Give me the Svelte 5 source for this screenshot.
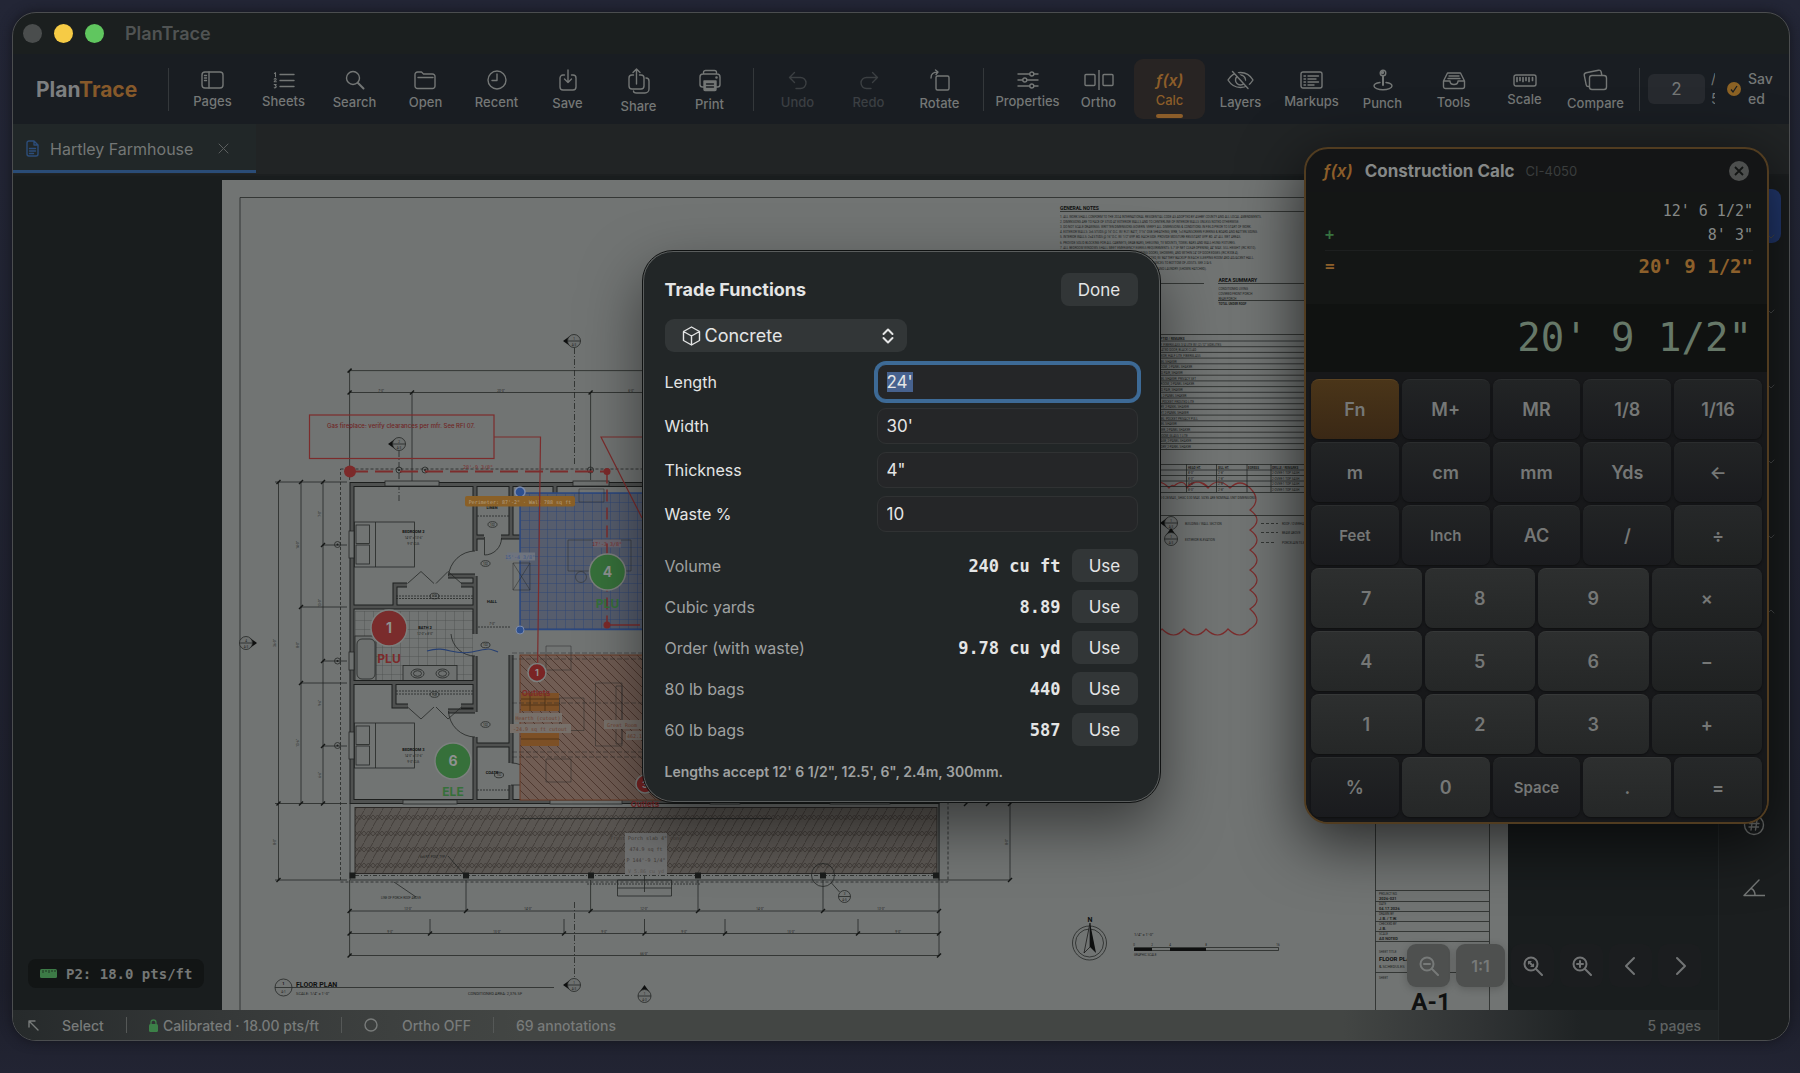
<script lang="ts">
  import { onMount } from 'svelte';

  type Tool = { label: string; w: number; h: number; icon: string; off?: boolean };

  const fileTools: Tool[] = [
    { label: 'Pages', w: 23, h: 18, icon: '<rect x="1" y="1" width="21" height="16" rx="3"/><path d="M8 1v16M3.5 4.500h2M3.500 7h2M3.500 9.500h2"/>' },
    { label: 'Sheets', w: 22, h: 17, icon: '<path d="M7 2.500h14M7 8.500h14M7 14.500h14"/><path stroke-width="1.100" d="M1.500 1.500l1-.8v4M1.200 7.200c.5-1 2-.8 2 .2 0 .8-2 1.300-2 2.300h2.200M1.200 12.500h2l-1 1.300c1.500 0 1.500 2.400-1 2"/>' },
    { label: 'Search', w: 20, h: 20, icon: '<circle cx="8" cy="8" r="6.500"/><path stroke-width="2" d="M13 13l5.500 5.500"/>' },
    { label: 'Open', w: 23, h: 19, icon: '<path d="M1 15V3.500A2.500 2.500 0 0 1 3.500 1h4l2 2h9A2.500 2.500 0 0 1 21 5.500V15a2.500 2.500 0 0 1-2.500 2.500h-15A2.500 2.500 0 0 1 1 15zM4 6.500h15"/>' },
    { label: 'Recent', w: 20, h: 20, icon: '<circle cx="10" cy="10" r="9"/><path d="M10 4v6.500H5"/>' },
    { label: 'Save', w: 18, h: 22, icon: '<path d="M5.500 6H4a3 3 0 0 0-3 3v9a3 3 0 0 0 3 3h10a3 3 0 0 0 3-3V9a3 3 0 0 0-3-3h-1.500M9 1v12.500M5.500 10L9 13.500 12.500 10"/>' },
    { label: 'Share', w: 24, h: 27, icon: '<path d="M6.500 8H5a3 3 0 0 0-3 3v8a3 3 0 0 0 3 3h9a3 3 0 0 0 3-3v-8a3 3 0 0 0-3-3h-1.500M9.500 17V2M6 5.500L9.500 2 13 5.500M19 11c2 0 3 1 3 3v8a4 4 0 0 1-4 4H9.500c-2 0-3-.8-3-2"/>' },
    { label: 'Print', w: 24, h: 23, icon: '<path d="M5.500 18H4.500A2.500 2.500 0 0 1 2 15.500V8a3 3 0 0 1 3-3h14a3 3 0 0 1 3 3v7.500a2.500 2.500 0 0 1-2.500 2.500h-1M5.500 5V3.500A2 2 0 0 1 7.500 1.500h9a2 2 0 0 1 2 2V5"/><path fill="currentColor" d="M6 12h12v8.500a1 1 0 0 1-1 1H7a1 1 0 0 1-1-1z"/><path stroke="#1a1e22" d="M8.500 15h7M8.500 18h7"/><circle cx="18.500" cy="8.500" r=".6"/>' }
  ];

  const editTools: Tool[] = [
    { label: 'Undo', w: 20, h: 19, off: true, icon: '<path d="M6.500 1.500L1.500 6.500l5 5M1.500 6.500h11a5.500 5.500 0 0 1 0 11H8"/>' },
    { label: 'Redo', w: 20, h: 19, off: true, icon: '<path d="M13.500 1.500l5 5-5 5M18.500 6.500h-11a5.500 5.500 0 0 0 0 11H12"/>' },
    { label: 'Rotate', w: 20, h: 22, icon: '<rect x="6" y="7" width="13" height="14" rx="1.500"/><path d="M1 9c0-4 2-6 7-6M5.500 1L8 3 6 5.500"/>' }
  ];

  const viewTools: Tool[] = [
    { label: 'Properties', w: 22, h: 18, icon: '<path d="M1 3h11.500M17 3h4M1 9h4.500M10 9h11M1 15h11.500M17 15h4"/><circle cx="14.800" cy="3" r="2"/><circle cx="7.800" cy="9" r="2"/><circle cx="14.800" cy="15" r="2"/>' },
    { label: 'Ortho', w: 30, h: 20, icon: '<rect x="1" y="4.500" width="10" height="11" rx="1"/><rect x="19" y="4.500" width="10" height="11" rx="1"/><path d="M15 0v20"/>' },
    { label: 'Calc', w: 30, h: 16, icon: '' },
    { label: 'Layers', w: 27, h: 20, icon: '<path d="M1 10c3-5 7.500-7.500 12.500-7.500S23 5 26 10c-3 5-7.500 7.500-12.500 7.500S4 15 1 10z"/><circle cx="13.500" cy="10" r="5"/><path fill="currentColor" d="M12.500 8l4.500 5a4 4 0 0 0-4.500-5z"/><path stroke="#191d22" stroke-width="3" d="M7.500 1L23 18"/><path d="M5.500 1.500L21 18.500"/>' },
    { label: 'Markups', w: 23, h: 18, icon: '<rect x="1" y="1" width="21" height="16" rx="2"/><path d="M4 5h1.500M8 5h10.500M4 8h1.500M8 8h8M4 11h1.500M8 11h10.500M4 14h1.500M8 14h6"/>' },
    { label: 'Punch', w: 20, h: 22, icon: '<circle cx="10" cy="4" r="2.800"/><circle fill="currentColor" cx="9.500" cy="3.500" r="1"/><path stroke-width="2" d="M10 7v9"/><path d="M7 13.500c-3.500.5-6 1.800-6 3.500 0 2 4 3.800 9 3.800s9-1.800 9-3.800c0-1.700-2.500-3-6-3.500"/>' },
    { label: 'Tools', w: 24, h: 19, icon: '<path d="M1.500 10L5.500 2h13l4 8v5.500a2 2 0 0 1-2 2h-17a2 2 0 0 1-2-2zM1.500 10h6.500c0 2 1.500 3.500 4 3.500s4-1.500 4-3.500h6.500M7 5h10M6 7.500h12"/>' },
    { label: 'Scale', w: 24, h: 13, icon: '<rect x="1" y="1" width="22" height="11" rx="2"/><path d="M4 3.500v4M7 3.500v3M10 3.500v4M13 3.500v3M16 3.500v4M19.500 3.500v3" stroke-width="1.700"/>' },
    { label: 'Compare', w: 25, h: 22, icon: '<rect x="6.500" y="6.500" width="17" height="14" rx="2.500"/><path d="M6 17.500c-1.500.2-2.500-.2-2.800-1.700L1.300 6.500c-.3-1.500.3-2.500 1.800-2.800L15.500 1.200c1.500-.2 2.400.3 2.700 1.800l.6 3"/>' }
  ];

  const keyRows = [
    ['Fn', 'M+', 'MR', '1/8', '1/16'],
    ['m', 'cm', 'mm', 'Yds', '←'],
    ['Feet', 'Inch', 'AC', '/', '÷'],
    ['7', '8', '9', '×'],
    ['4', '5', '6', '−'],
    ['1', '2', '3', '+'],
    ['%', '0', 'Space', '.', '=']
  ];
  const smallKeys = ['Feet', 'Inch', 'Space'];

  function keyClass(key: string) {
    if (key === 'Fn') return 'fn';
    if (/^[0-9.]$/.test(key)) return 'digit';
    if ('÷×−+='.includes(key)) return 'op';
    return '';
  }

  const tape = [
    { op: '', value: `12' 6 1/2"` },
    { op: '+', value: `8' 3"` }
  ];

  let fields = $state([
    { id: 'length', label: 'Length', value: `24'` },
    { id: 'width', label: 'Width', value: `30'` },
    { id: 'thickness', label: 'Thickness', value: `4"` },
    { id: 'waste', label: 'Waste %', value: '10' }
  ]);

  const results = [
    { label: 'Volume', value: '240 cu ft' },
    { label: 'Cubic yards', value: '8.89' },
    { label: 'Order (with waste)', value: '9.78 cu yd' },
    { label: '80 lb bags', value: '440' },
    { label: '60 lb bags', value: '587' }
  ];

  let page = $state('2');
  let trade = $state('Concrete');

  onMount(() => {
    const first = document.getElementById('length') as HTMLInputElement;
    first.focus();
    first.select();
  });

  // plan geometry
  const walls = [
    'M352 484.500H937V801.500H352z',
    'M475 484V551M475 576V634M475 656V712M475 737V801',
    'M511 484V537M511 655V745M511 745V763M511 785V801M555 484V537',
    'M352 607H475M395 607V585H407M461 585H475M475 537H484M501 537H532M448 576H475',
    'M352 682.500H475M394 682V706H408M461 706H475M448 711H475M475 745H511'
  ].join('');
  const openings = [
    [385, 481, 54, 5], [573, 481, 36, 5], [349, 531, 5, 27], [349, 652, 5, 18], [349, 732, 5, 27],
    [403, 800, 54, 4], [550, 800, 72, 4], [710, 800, 30, 4], [830, 800, 60, 4]
  ];
  const ticks = [
    [349.6, 370.6], [349.6, 392.5], [412, 392.5], [590.6, 392.5],
    [278.500, 482], [301, 482], [323, 482], [323, 545], [301, 607], [323, 661], [301, 683], [323, 746],
    [278.500, 803.5], [301, 803.5], [323, 803.5], [278.500, 880],
    [349.6, 911], [466, 911], [590.6, 911], [698, 911], [823, 911], [939, 911],
    [349.6, 933.5], [430, 933.5], [564, 933.5], [644.5, 933.5], [725, 933.5], [858, 933.5], [939, 933.5],
    [349.6, 955.5], [939, 955.5], [966, 804], [988, 804], [1010, 804], [1010, 880]
  ];
  const dims: [number, number, string][] = [
    [381, 391.5, `7'-0"`], [501, 391.500, `20'-0"`], [631, 391.500, `6'-0"`], [408, 910, `13'-0"`], [528, 910, `14'-0"`],
    [644, 910, `12'-0"`], [760, 910, `14'-0"`], [881, 910, `13'-0"`], [390, 932.5, `9'-0"`], [497, 932.500, `15'-0"`],
    [604, 932.500, `9'-0"`], [684, 932.500, `9'-0"`], [791, 932.500, `15'-0"`], [898, 932.500, `9'-0"`], [644, 954.5, `66'-0"`], [492, 625, `7'-0"`]
  ];
  const sideDims: [number, number, string][] = [
    [321, 514, `7'-0"`], [299, 545, `14'-0"`], [321, 603, `13'-0"`], [299, 645, `8'-0"`], [276, 643, `36'-0"`],
    [321, 703, `9'-6"`], [299, 743, `13'-6"`], [321, 775, `6'-6"`], [276, 842, `8'-0"`], [1008, 842, `8'-0"`]
  ];
  const markers = [
    { x: 574, y: 341, r: 'left', n: '1' },
    { x: 399, y: 444, r: 'left', n: '2' },
    { x: 246, y: 643, r: 'right', n: '4' },
    { x: 574, y: 985, r: 'left', n: '1' },
    { x: 644.5, y: 996, r: 'up', n: '1' },
    { x: 1171, y: 523, r: 'left', n: '1' },
    { x: 1171, y: 539, r: 'up', n: '1' }
  ];
  const arrows: Record<string, string> = {
    left: 'M-11 0L-4-5V5z',
    right: 'M11 0L4-5V5z',
    up: 'M0-11L-5-4H5z'
  };
  const tags = [
    [492.500, 524.5], [485.500, 563.5], [434.500, 596], [485.500, 645], [434.500, 694.5], [485.500, 724.5], [499, 775], [542, 524.5], [644, 815]
  ];
  const bubbles = [
    [399, 470], [425, 470], [590.500, 470], [337.500, 544.5], [337.500, 661], [337.500, 745.5]
  ];
  const posts = [352.5, 466, 591, 698, 823, 936];
  const beds = [522, 723];
  const notes = [
    'ALL WORK SHALL CONFORM TO THE 2024 INTERNATIONAL RESIDENTIAL CODE AS ADOPTED BY ASHBY COUNTY AND ALL LOCAL AMENDMENTS.',
    'DIMENSIONS ARE TO FACE OF STUD AT EXTERIOR WALLS AND TO CENTERLINE OF INTERIOR WALLS UNLESS NOTED OTHERWISE.',
    'DO NOT SCALE DRAWINGS. WRITTEN DIMENSIONS GOVERN. VERIFY ALL DIMENSIONS & CONDITIONS IN FIELD PRIOR TO START OF WORK.',
    'EXTERIOR WALLS: 2x6 STUDS @ 16" O.C. W/ R-21 BATT, 7/16" OSB SHEATHING, WRB, 1x3 RAINSCREEN FURRING & BOARD AND BATTEN SIDING.',
    'INTERIOR WALLS: 2x4 STUDS @ 16" O.C. W/ 1/2" GYP. BD. EACH SIDE. PROVIDE MOISTURE RESISTANT GYP. BD. AT ALL WET AREAS.',
    'PROVIDE SOLID BLOCKING FOR ALL CABINETS, GRAB BARS, SHELVING, TV MOUNTS, TOWEL BARS AND WALL-HUNG FIXTURES.',
    'ALL BEDROOM WINDOWS SHALL MEET EMERGENCY EGRESS REQUIREMENTS: 5.7 SF NET CLEAR OPENING, 44" MAX. SILL HEIGHT (IRC R310).',
    'SAFETY GLAZING IN ALL HAZARDOUS LOCATIONS INCLUDING DOORS, SHOWERS, AND WITHIN 24" OF DOOR EDGES (IRC R308.4).',
    'SMOKE AND CO ALARMS SHALL BE HARDWIRED, INTERCONNECTED, W/ BATTERY BACKUP IN EACH SLEEPING ROOM AND ADJACENT HALL.',
    'GAS FIREPLACE TO MAINTAIN MANUFACTURER REQUIRED CLEARANCES TO BOTTOM OF JOISTS. SEE 2/A-5.',
    'EXHAUST FANS TO EXTERIOR IN BATHROOMS, POWDER, MUDROOM AND LAUNDRY (SHOWN HATCHED).'
  ];
  const doors = [
    'ENTRY, FIBERGLASS 3/4 LITE W/ (2) 12" SIDELITES', 'INSULATED DOOR, BLACK CLAD', 'EXTERIOR, HALF LITE, FIBERGLASS', '2-PANEL SHAKER',
    'BEDROOM, 2-PANEL SHAKER', 'BIFOLD PAIR, SHAKER', '2-PANEL SHAKER, PRIVACY SET', 'BATHROOM, 2-PANEL SHAKER', 'BIFOLD PAIR, SHAKER',
    'LINEN, 2-PANEL SHAKER', 'BARN, POCKET, FROSTED LITE', 'PANTRY, 2-PANEL SHAKER', 'CLOSET, 2-PANEL SHAKER', '2-PANEL, POCKET PRIVACY PULL',
    '2-PANEL SHAKER', 'POWDER, 2-PANEL SHAKER', 'MUDROOM, GLASS 1 LITE', 'STORAGE, 2-PANEL SHAKER', 'LAUNDRY, 2-PANEL SHAKER'
  ];
  const titleBlock: [number, string, string][] = [
    [895, 'PROJECT NO.', '2026-021'],
    [905, 'DATE', '04.17.2026'],
    [915, 'DRAWN BY', 'J.B. / T.W.'],
    [925, 'CHECKED BY', 'J.B.'],
    [935, 'SCALE', 'AS NOTED']
  ];
</script>

{#snippet toolButton(tool: Tool)}
  <button class="tool" class:active={tool.label === 'Calc'} disabled={tool.off}>
    {#if tool.label === 'Calc'}
      <span class="fx tool-fx">ƒ(x)</span>
    {:else}
      <svg class="icon" width={tool.w} height={tool.h} viewBox="0 0 {tool.w} {tool.h}">{@html tool.icon}</svg>
    {/if}
    <span class="tool-label">{tool.label}</span>
  </button>
{/snippet}

<div class="desktop">
  <div class="window">
    <header class="titlebar">
      <span class="light"></span>
      <span class="light yellow"></span>
      <span class="light green"></span>
      <span class="window-title">PlanTrace</span>
    </header>

    <!-- Toolbar -->
    <nav class="toolbar">
      <div class="brand">Plan<span>Trace</span></div>
      <div class="sep"></div>
      {#each fileTools as tool}{@render toolButton(tool)}{/each}
      <div class="sep"></div>
      {#each editTools as tool}{@render toolButton(tool)}{/each}
      <div class="sep"></div>
      {#each viewTools as tool}{@render toolButton(tool)}{/each}
      <div class="sep"></div>
      <input class="page-input" aria-label="Page" bind:value={page} />
      <span class="page-total">/ 5</span>
      <svg class="saved-icon" width="14" height="14" viewBox="0 0 14 14">
        <circle cx="7" cy="7" r="7" fill="#8c6224" />
        <path d="M4 7.500l2 2.500 4-6" fill="none" stroke="#1a1e22" stroke-width="1.300" />
      </svg>
      <span class="saved">Saved</span>
    </nav>

    <!-- Document tabs -->
    <div class="tabs">
      <div class="tab">
        <svg class="icon doc" width="13" height="17" viewBox="0 0 13 17">
          <path d="M8 1H3a2 2 0 0 0-2 2v11a2 2 0 0 0 2 2h7a2 2 0 0 0 2-2V5zM8 1v4h4M3.500 8.500h6M3.500 11h6M3.500 13.500h4" />
        </svg>
        <span>Hartley Farmhouse</span>
        <button class="tab-close" aria-label="Close tab">
          <svg class="icon" width="11" height="11" viewBox="0 0 11 11"><path d="M1 1l9 9M10 1l-9 9" /></svg>
        </button>
      </div>
    </div>

    <div class="workspace">
      <div class="main">
        <div class="canvas">
          <svg class="sheet" width="1286" height="831" viewBox="222 180 1286 831">
            <defs>
              <pattern id="tile" width="9" height="9" patternUnits="userSpaceOnUse" x="355" y="611">
                <path d="M0 0H9M0 0V9" fill="none" stroke="#4a4d4c" stroke-width=".8" />
              </pattern>
              <pattern id="bluegrid" width="9" height="9" patternUnits="userSpaceOnUse" x="520" y="493">
                <rect width="9" height="9" fill="#565d6d" />
                <path d="M0 0H9M0 0V9" fill="none" stroke="#2f4674" stroke-width="1" />
              </pattern>
              <pattern id="hatch" width="9" height="9" patternUnits="userSpaceOnUse">
                <rect width="9" height="9" fill="#705c53" />
                <path d="M-1 -1L10 10M-1 8L1 10M8 -1L10 1" stroke="#4c352c" stroke-width=".9" />
              </pattern>
              <pattern id="porch" width="9" height="16" patternUnits="userSpaceOnUse" x="355" y="811">
                <rect width="9" height="16" fill="#5a5652" />
                <path d="M-1 17L10 -2M-4 6L4 -8M5 24L13 10M0 4l4.500 5 4.500 -5M0 9l4.500 -5 4.500 5" fill="none" stroke="#3c3733" stroke-width=".8" />
              </pattern>
            </defs>
            <rect x="222" y="180" width="1286" height="831" fill="#717473" />
            <path class="ln" d="M240 1011V197.500H1489.500V1011M1375.500 823V1011" />

            <!-- dimension lines -->
            <path class="ln" d="M349.600 370.600H939M349.600 392.500H939M349.600 370V480M412 392V486M590.600 392V480" />
            <path class="ln" d="M278.500 482V880M301 482V803.500M323 482V803.500M275 482H347M301 607H347M323 545H347M323 661H347M301 683H347M323 746H347M275 803.500H347M275 880H347" />
            <path class="ln" d="M349.600 880V956M466 880V911M590.600 880V911M698 880V911M823 880V911M939 803V956M349.600 911H939M349.600 933.500H939M349.600 955.500H939M430 919V933M564 919V933M644.500 919V933M725 919V933M858 919V933M939 880H1010M1010 802V880" />
            {#each ticks as [x, y]}
              <path d="M{x - 2} {y + 2}l4-4" stroke="#151716" stroke-width="1.500" />
            {/each}
            {#each dims as [x, y, text]}
              <text class="tiny mid" {x} {y}>{text}</text>
            {/each}
            {#each sideDims as [x, y, text]}
              <text class="tiny mid" {x} {y} transform="rotate(-90 {x} {y})">{text}</text>
            {/each}
            <path class="ln" stroke-dasharray="3 2" d="M340.500 469H948V882H340.500z" />
            <path class="ln" stroke-dasharray="6 2 1 2" d="M574.500 348V464M399 451V502M574.500 902V978" />

            <!-- bath tile and fixtures -->
            <rect x="355" y="611" width="118" height="70" fill="url(#tile)" />
            <rect class="ln paper" x="355" y="636" width="21" height="45" />
            <rect class="ln" x="357" y="639" width="18" height="40" rx="5" />
            <rect class="ln paper" x="403" y="665.500" width="54" height="16" />
            {#each [417.500, 442.500] as x}
              <ellipse class="ln" cx={x} cy="673.500" rx="6.500" ry="4.500" />
              <ellipse class="ln" cx={x} cy="673.500" rx="4" ry="2.800" />
            {/each}

            <!-- walls -->
            <path d={walls} fill="none" stroke="#1d1f1e" stroke-width="5" />
            <path d={walls} fill="none" stroke="#4f5150" stroke-width="3" />
            {#each openings as [x, y, w, h]}
              <rect class="ln paper" {x} {y} width={w} height={h} />
            {/each}
            {#each beds as y}
              <rect class="ln" x="354.500" {y} width="60" height="45" />
              <path class="ln" d="M375.500 {y}v45" />
              <rect class="ln" x="356" y={y + 3} width="13.500" height="18.500" />
              <rect class="ln" x="356" y={y + 23} width="13.500" height="19" />
            {/each}
            <path class="ln" d="M448.500 576A27 27 0 0 1 475 551M484.500 537V555A17 17 0 0 0 501.500 538M451 634A24 24 0 0 0 475 656M448.500 711A27 27 0 0 0 475 737M511.600 763A23 23 0 0 1 534.500 785H511" />
            <path class="ln" d="M407.500 583.500L421 571.500 434 583.500M436 583.500L448 571.500 461.500 583.500M407.500 707L421 719 434 707M436 707L448 719 461.500 707" />
            <path class="ln" stroke-dasharray="2 1" d="M396 596H473M396 598.500H473M396 691H473M396 694H473M477 516H509M477 790H509M478 627H511" />
            {#each tags as [x, y]}
              <ellipse class="ln" cx={x} cy={y} rx="4.500" ry="2.800" />
              <text class="tiny mid" {x} y={y + 1}>102</text>
            {/each}
            {#each bubbles as [x, y]}
              <circle class="ln" cx={x} cy={y} r="3" />
              <circle cx={x} cy={y} r="1" fill="#1d1f1e" />
            {/each}
            <text class="room mid" x="413.500" y="532.500">BEDROOM 2</text>
            <text class="tiny mid" x="413.500" y="538.500">14'-0" x 13'-6"</text>
            <text class="tiny mid" x="413.500" y="544.500">9'-0" CLG.</text>
            <text class="room mid" x="413.500" y="750.500">BEDROOM 3</text>
            <text class="tiny mid" x="413.500" y="756.500">14'-0" x 13'-6"</text>
            <text class="tiny mid" x="413.500" y="762.500">9'-0" CLG.</text>
            <text class="room mid" x="425" y="629">BATH 2</text>
            <text class="tiny mid" x="425" y="635">12'-0" x 8'-0"</text>
            <text class="room mid" x="492" y="603">HALL</text>
            <text class="room mid" x="492" y="509">LINEN</text>
            <text class="room mid" x="492" y="774">COATS</text>

            <!-- kitchen take-off -->
            <rect x="520" y="493" width="170" height="136.500" fill="url(#bluegrid)" stroke="#2c4880" stroke-width="1.500" />
            <path class="ln" d="M579 489h25v13h-25zM568 540h63v31h-63zM513 563h17v27h-17zM513 563l17 27M530 563l-17 27" opacity=".6" />
            <circle class="ln" cx="581" cy="577" r="5.500" opacity=".6" />
            <circle cx="520" cy="492" r="5" fill="#2e5090" stroke="#7d8bab" stroke-width="1.500" />
            <circle cx="520" cy="630" r="4" fill="#2e5090" stroke="#7d8bab" />
            <rect x="465" y="496" width="110" height="10.500" rx="2" fill="#8a6027" />
            <text class="lab mid" x="520" y="503.500" fill="#b5a084">Perimeter: 87'-2" · Wall 788 sq ft</text>
            <rect x="507" y="552.500" width="28" height="8" fill="#6f747e" />
            <text class="lab mid" x="520" y="559" fill="#3d5688">15'-4 3/8"</text>
            <rect x="593" y="539.500" width="28" height="8" fill="#6b6670" />

            <!-- great room take-off -->
            <rect x="520" y="655" width="170" height="145" fill="url(#hatch)" stroke="#6b3a26" />
            <path class="ln" d="M546 646h25v24h-25zM559.500 698h24.500v32.500h-24.500zM595.500 683h26.500v63h-26.500zM616 686h6v58h-6zM546 759h25v23h-25z" opacity=".6" />
            <path d="M521 693h38v18h-38zM521 733h38v13h-38z" fill="#7d5026" />
            <path d="M521 699h38M521 705h38M521 739h38M530 693v18M545 693v18" stroke="#533418" />
            <g fill="#77706a">
              <rect x="515" y="713" width="47" height="9" />
              <rect x="510" y="724" width="61" height="9" />
              <rect x="604" y="720" width="50" height="9" />
              <rect x="626" y="731" width="30" height="9" />
            </g>
            <text class="lab mid" x="538" y="720" fill="#6d3f30">Hearth (cutout)</text>
            <text class="lab mid" x="540" y="731" fill="#6d3f30">-24.9 sq ft cutout</text>
            <text class="lab" x="607" y="727" fill="#6d3f30">Great Room</text>
            <text class="lab" x="627" y="738" fill="#6d3f30">462.1</text>
            <path class="ln" stroke-dasharray="5 2" d="M512 653H642M512 659H642M512 703H642M512 752H642M512 757H642" opacity=".6" />

            <!-- porch -->
            <rect x="355" y="807.500" width="582" height="66" fill="url(#porch)" stroke="#2b2826" />
            <path class="ln" d="M350 803.500V880H939V803.500M520 818.500H772" />
            <path class="ln" stroke-dasharray="4 2 1 2" d="M355 875.500H936" />
            <path class="ln" stroke-dasharray="2 1" d="M587 884H700" />
            {#each posts as x}
              <rect x={x - 3} y="872.500" width="6" height="6" fill="#1a1c1b" />
            {/each}
            <path class="ln" d="M617.500 880h54v16h-54zM617.500 888h54M644.500 876v16M394 882l22 15M448 856l15 17" />
            <text class="tiny" x="381" y="898.500">LINE OF PORCH ROOF ABOVE</text>
            <text class="tiny" x="420" y="858">6x6 P.T. POST, TYP.</text>
            <circle class="ln" cx="823" cy="875" r="11.500" />
            <path class="ln" d="M831.500 883l8 9" />
            <circle class="ln" cx="844.500" cy="896.500" r="6" />
            <path class="ln" d="M838.500 896.500h12" />
            <text class="tiny mid" x="844.500" y="895">3</text>
            <text class="tiny mid" x="844.500" y="901">A-5</text>
            <rect x="625" y="833" width="42" height="42" fill="#6f7070" />
            <text class="lab mid" x="646" y="840" fill="#3f3a36">Front Porch slab 4" conc</text>
            <text class="lab mid" x="646" y="851" fill="#3f3a36">474.9 sq ft</text>
            <text class="lab mid" x="646" y="862" fill="#3f3a36">P 144'-9 1/4"</text>
            <text class="lab mid" x="646" y="873" fill="#5a5653">V 5.86 cu yd</text>

            <!-- red markups -->
            <g fill="none" stroke="#7c2c2c" stroke-width="1.200">
              <rect x="309.500" y="415" width="184.500" height="43.500" />
              <path d="M494 437H540.500L537.500 672M642 437H601L642 518" />
              <path d="M350 471.500H607" stroke-width="1.800" stroke-dasharray="18 7" />
              <path d="M607 471.500V625" stroke-width="1.500" stroke-dasharray="12 6" />
              <path d="M607 625H640" stroke-width="1.500" />
              <path d="M1151 486q9 -8 18 2q3 -4 5 -2q10 -8 13 2q12 -12 22 0M1186 488q10 -12 22 0q10 -12 22 0q10 -10 20 0q12 12 0 22q14 10 0 20q14 10 0 20q14 10 0 20q14 10 0 20q14 10 0 19q14 12 0 20q-10 12 -22 0q-10 12 -22 0q-10 12 -22 0q-10 12 -22 0q-8 10 -14 6" />
            </g>
            <text class="note mid" x="401" y="427.500">Gas fireplace: verify clearances per mfr. See RFI 07.</text>
            <text class="lab mid red" x="478" y="468.500">28'-9 3/8"</text>
            <text class="lab mid red" x="607" y="545.500">17'-3 3/8"</text>
            <circle cx="350" cy="471.500" r="6" fill="#7c2a2a" />
            <circle cx="607" cy="471.500" r="3.500" fill="#7c2a2a" />
            <circle cx="607" cy="625" r="3.500" fill="#7c2a2a" />
            <path d="M427 651c20-6 25 5 45 1s15-4 26 0" fill="none" stroke="#263f72" stroke-width="1.200" />

            <!-- trade pins -->
            <g stroke="#7c807e" stroke-width="1.500">
              <circle cx="389" cy="628" r="18" fill="#7a2c2c" />
              <circle cx="607.500" cy="572" r="18" fill="#36703a" />
              <circle cx="453" cy="761" r="18" fill="#36703a" />
              <circle cx="537" cy="672.500" r="9" fill="#7a2424" />
              <circle cx="645" cy="784" r="9" fill="#7a2424" />
            </g>
            <text class="pin" x="389" y="633">1</text>
            <text class="pin" x="607.500" y="577">4</text>
            <text class="pin" x="453" y="766">6</text>
            <text class="pin small" x="537" y="676">1</text>
            <text class="pin small" x="645" y="788">3</text>
            <text class="trade red" x="389" y="663">PLU</text>
            <text class="trade" x="607.500" y="608" fill="#36703a">PLU</text>
            <text class="trade" x="453" y="795.500" fill="#36703a">ELE</text>
            <text class="outlets red" x="536" y="695.500">Outlets</text>
            <text class="outlets red" x="645" y="807">Outlets</text>

            {#each markers as m}
              <g transform="translate({m.x} {m.y})">
                <path d={arrows[m.r]} fill="#0e0f0f" />
                <circle class="ln paper" r="6.500" />
                <path class="ln" d="M-6.500 0h13" />
                <text class="tiny mid" y="-1">{m.n}</text>
                <text class="tiny mid" y="4.500">A-3</text>
              </g>
            {/each}

            <circle class="ln" cx="283.500" cy="987.500" r="8.500" />
            <path class="ln" d="M275 987.500H554" />
            <text class="room mid" x="283.500" y="985">1</text>
            <text class="tiny mid" x="283.500" y="993">A-1</text>
            <text class="plan-title" x="296" y="986.500">FLOOR PLAN</text>
            <text class="tiny4" x="296" y="994.500">SCALE: 1/4" = 1'-0"</text>
            <text class="tiny4" x="468" y="994.500">CONDITIONED AREA: 2,376 SF</text>

            <!-- north arrow and bar scale -->
            <circle class="ln" cx="1089.500" cy="943" r="17" />
            <circle class="ln" cx="1089.500" cy="943" r="14" />
            <path d="M1090 923L1084 953l6-6z" fill="#717473" stroke="#0e0f0f" stroke-width=".7" />
            <path d="M1090 923l6 30-6-6z" fill="#0e0f0f" />
            <text class="plan-title mid" x="1090" y="922">N</text>
            <text class="tiny4" x="1134" y="936">1/4" = 1'-0"</text>
            <path class="ln" d="M1134.500 947.500h144v3h-144z" />
            <path d="M1134 948h18v3h-18zM1170 948h36v3h-36z" fill="#0e0f0f" />
            <text class="tiny" x="1134" y="955.500">GRAPHIC SCALE</text>
            {#each [[1134, '0'], [1152, '2'], [1170, '4'], [1206, '8'], [1278, '16']] as [x, n]}
              <text class="tiny mid" {x} y="946">{n}</text>
            {/each}

            <!-- notes and schedules -->
            <text class="head" x="1060" y="209.500">GENERAL NOTES</text>
            <path class="ln" d="M1060 211.500H1360M1060 283.500H1204M1218 283.500H1360M1218 300.500H1360M1160 515.500H1360" />
            {#each notes as note, i}
              <text class="fine" x="1060" y={217.500 + i * 5.2}>{i + 1}. {note}</text>
            {/each}
            <text class="head" x="1218.500" y="281.500">AREA SUMMARY</text>
            <text class="fine" x="1218.500" y="289.500">CONDITIONED LIVING</text>
            <text class="fine" x="1218.500" y="294.500">COVERED FRONT PORCH</text>
            <text class="fine" x="1218.500" y="299.500">REAR PORCH</text>
            <text class="fine strong" x="1218.500" y="304.500">TOTAL UNDER ROOF</text>
            <path class="ln" d="M1150 334.500H1360" />
            <text class="fine strong" x="1153" y="339.500">ACCEPTED / REMARKS</text>
            {#each doors as door, i}
              <path class="ln" d="M1150 {341 + i * 5.7}H1360" />
              <text class="fine" x="1153" y={345.500 + i * 5.7}>{door}</text>
            {/each}
            <path class="ln" d="M1150 449.500H1360M1150 464.500H1360M1150 470H1360M1150 475.500H1360M1150 481H1360M1150 486.500H1360M1150 492.500H1360M1186.500 464V492M1216.500 464V492M1247 464V492M1271 464V492" />
            {#each [[1188, 'HEAD HT.'], [1218, 'SILL HT.'], [1248, 'EGRESS'], [1272, 'GRILLE / REMARKS']] as [x, t]}
              <text class="fine strong" {x} y="468.500">{t}</text>
            {/each}
            {#each [474, 479.500, 485, 490.500] as y}
              <text class="fine" x="1188" {y}>8'-0"</text>
              <text class="fine" x="1218" {y}>2'-8"</text>
              <text class="fine" x="1272" {y}>2-OVER-1 TOP SASH</text>
            {/each}
            <text class="fine" x="1160" y="498.500">U-0.28 MAX., SHGC 0.30 MAX. SIZES ARE NOMINAL UNIT DIMENSIONS</text>
            <text class="fine" x="1185" y="524.500">BUILDING / WALL SECTION</text>
            <text class="fine" x="1185" y="540.500">EXTERIOR ELEVATION</text>
            <text class="fine" x="1282" y="524.500">ROOF / OVERHANG</text>
            <text class="fine" x="1282" y="533.500">BEAM ABOVE</text>
            <text class="fine" x="1282" y="543.500">PORCELAIN TILE</text>
            <path class="ln" stroke-dasharray="3 2" d="M1261 523.500h17M1261 532.500h17M1261 542.500h15" />

            <!-- title block -->
            <path class="ln" d="M1375.500 890.500H1489M1375.500 901.500H1489M1375.500 911.500H1489M1375.500 921.500H1489M1375.500 931.500H1489M1375.500 941.500H1489M1375.500 972.500H1489" />
            {#each titleBlock as [y, label, value]}
              <text class="tiny" x="1379" {y}>{label}</text>
              <text class="tiny4 strong" x="1379" y={y + 5}>{value}</text>
            {/each}
            <text class="tiny" x="1379" y="953">SHEET TITLE</text>
            <text class="block-title" x="1379" y="961">FLOOR PLAN</text>
            <text class="tiny4" x="1379" y="967.500">& SCHEDULES</text>
            <text class="tiny" x="1379" y="978.500">SHEET</text>
            <text class="sheet-no" x="1431" y="1010">A-1</text>
          </svg>

          <div class="scale-chip">
            <svg width="17" height="9" viewBox="0 0 17 9">
              <rect width="17" height="9" rx="1.500" fill="#3c7a46" />
              <path d="M3 1v3M6 1v2M9 1v3M12 1v2M15 1v2" stroke="#16241a" stroke-width=".8" />
            </svg>
            P2: 18.0 pts/ft
          </div>

          <div class="zoom-bar">
            <button class="zoom light-btn" aria-label="Zoom out">
              <svg class="icon" width="20" height="20" viewBox="0 0 20 20"><circle cx="8" cy="8" r="6.500" /><path d="M13 13l6 6M5 8h6" /></svg>
            </button>
            <button class="zoom light-btn wide">1:1</button>
            <button class="zoom" aria-label="Zoom to fit">
              <svg class="icon" width="20" height="20" viewBox="0 0 20 20"><circle cx="8" cy="8" r="6.500" /><path d="M13 13l6 6M6 6l4 4" /><path d="M5.500 8V5.500H8M8 10.500h2.500V8" stroke-width="1.200" /></svg>
            </button>
            <button class="zoom" aria-label="Zoom in">
              <svg class="icon" width="20" height="20" viewBox="0 0 20 20"><circle cx="8" cy="8" r="6.500" /><path d="M13 13l6 6M5 8h6M8 5v6" /></svg>
            </button>
            <button class="zoom" aria-label="Previous page">
              <svg class="icon" width="20" height="20" viewBox="0 0 20 20"><path d="M13 2l-8 8 8 8" /></svg>
            </button>
            <button class="zoom" aria-label="Next page">
              <svg class="icon" width="20" height="20" viewBox="0 0 20 20"><path d="M7 2l8 8-8 8" /></svg>
            </button>
          </div>
        </div>

        <footer class="status">
          <svg class="icon" width="11" height="11" viewBox="0 0 11 11"><path d="M10 10L1 1M1 7V1h6" /></svg>
          <span class="mode">Select</span>
          <i></i>
          <svg width="9" height="13" viewBox="0 0 9 13">
            <rect y="5" width="9" height="8" rx="1.500" fill="#3c8048" />
            <path d="M2 6V3.500a2.500 2.500 0 0 1 5 0V6" fill="none" stroke="#3c8048" stroke-width="1.300" />
          </svg>
          <span class="calibrated">Calibrated · 18.00 pts/ft</span>
          <i></i>
          <svg class="icon" width="14" height="14" viewBox="0 0 14 14"><circle cx="7" cy="7" r="6" /></svg>
          <span class="ortho">Ortho OFF</span>
          <i></i>
          <span>69 annotations</span>
          <span class="pages">5 pages</span>
        </footer>
      </div>

      <!-- Tool palette -->
      <aside class="palette">
        {#each [0, 1, 2, 3, 4, 5] as n}
          <button class="group" class:on={n === 0} aria-label="Tool group">
            <svg class="icon" width="8" height="5" viewBox="0 0 8 5"><path d={n === 5 ? 'M1 4l3-3 3 3' : 'M1 1l3 3 3-3'} /></svg>
          </button>
        {/each}
        <div class="palette-tools">
          <button aria-label="Count">
            <svg class="icon" width="22" height="22" viewBox="0 0 22 22"><circle cx="11" cy="11" r="9.500" /><path d="M9.500 6L8 16M14 6l-1.500 10M6.500 9.500h9.500M6 13h9.500" /></svg>
          </button>
          <button aria-label="Angle">
            <svg class="icon" width="22" height="18" viewBox="0 0 22 18"><path d="M16 1L1 16.500h21M8 9.500c3 1 4 4 4 7" /></svg>
          </button>
        </div>
      </aside>
    </div>

    <!-- Construction calculator -->
    <section class="calc">
      <div class="calc-head">
        <span class="fx">ƒ(x)</span>
        <h2>Construction Calc</h2>
        <span class="model">CI-4050</span>
        <button class="calc-close" aria-label="Close calculator">
          <svg width="20" height="20" viewBox="0 0 20 20">
            <circle cx="10" cy="10" r="10" fill="#4d4f4e" />
            <path d="M6 6l8 8M14 6l-8 8" stroke="#131514" stroke-width="1.800" />
          </svg>
        </button>
      </div>
      <div class="tape">
        {#each tape as row}
          <div class="tape-row"><b>{row.op}</b><span>{row.value}</span></div>
        {/each}
        <div class="tape-row total"><b>=</b><span>20' 9 1/2"</span></div>
      </div>
      <output class="display">20' 9 1/2"</output>
      <div class="keys">
        {#each keyRows as row}
          <div class="key-row">
            {#each row as key}
              <button class="key {keyClass(key)}" class:small={smallKeys.includes(key)}>{key}</button>
            {/each}
          </div>
        {/each}
      </div>
    </section>

    <!-- Trade functions sheet -->
    <div class="modal-layer">
      <form class="modal" onsubmit={(e) => e.preventDefault()}>
        <div class="modal-head">
          <h1>Trade Functions</h1>
          <button type="button" class="btn done">Done</button>
        </div>
        <div class="picker">
          <svg class="icon cube" width="19" height="20" viewBox="0 0 19 20"><path d="M9.500 1l8 4.500v9l-8 4.500-8-4.500v-9zM1.500 5.500l8 4.500 8-4.500M9.500 10v9" /></svg>
          <select aria-label="Trade" bind:value={trade}>
            <option>Concrete</option>
            <option>Framing</option>
            <option>Drywall</option>
          </select>
          <svg class="icon updown" width="12" height="16" viewBox="0 0 12 16"><path d="M1.500 6L6 1.500 10.500 6M1.500 10L6 14.500 10.500 10" /></svg>
        </div>
        <div class="fields">
          {#each fields as field}
            <div class="field">
              <label for={field.id}>{field.label}</label>
              <input id={field.id} type="text" bind:value={field.value} />
            </div>
          {/each}
        </div>
        <div class="results">
          {#each results as r}
            <div class="result">
              <span>{r.label}</span>
              <strong>{r.value}</strong>
              <button type="button" class="btn">Use</button>
            </div>
          {/each}
        </div>
        <p class="hint">Lengths accept 12' 6 1/2", 12.5', 6", 2.4m, 300mm.</p>
      </form>
    </div>
  </div>
</div>

<style>
  :global(body) { margin: 0; background: #1f212e; }
  * { box-sizing: border-box; }
  button, input, select { font: inherit; color: inherit; }
  button { background: none; border: 0; padding: 0; }
  .icon {
    fill: none;
    stroke: currentColor;
    stroke-width: 1.4;
    stroke-linecap: round;
    stroke-linejoin: round;
    flex: none;
  }

  .desktop {
    height: 100vh;
    padding: 12px 10px 32px 12px;
    background: linear-gradient(#232636, #1d1f2b 92%, #222433);
    font-family: Inter, "Liberation Sans", sans-serif;
    color: #747776;
  }
  .window {
    position: relative;
    display: flex;
    flex-direction: column;
    height: 100%;
    border: 1px solid #4b4d4f;
    border-radius: 24px;
    overflow: hidden;
    background: #1b1f1f;
    box-shadow: 0 0 12px #14151d;
  }

  .titlebar {
    flex: none;
    display: flex;
    align-items: center;
    gap: 12px;
    height: 41px;
    padding-left: 10px;
  }
  .light {
    width: 19px;
    height: 19px;
    border-radius: 50%;
    background: #4a4d4d;
  }
  .yellow { background: #f6cb45; }
  .green { background: #60c65f; }
  .window-title {
    margin-left: 9px;
    font-size: 18px;
    font-weight: 600;
    color: #505353;
  }

  .toolbar {
    flex: none;
    display: flex;
    align-items: center;
    height: 70px;
    padding-left: 23px;
    background: #191d22;
  }
  .brand {
    flex: none;
    width: 124px;
    font-size: 21px;
    font-weight: 700;
    color: #7d7f80;
  }
  .brand span { color: #86592a; }
  .sep {
    flex: none;
    width: 1px;
    height: 43px;
    margin: 0 8px;
    background: #34383b;
  }
  .tool {
    flex: none;
    position: relative;
    display: flex;
    flex-direction: column;
    align-items: center;
    justify-content: center;
    gap: 5px;
    width: 71px;
    height: 60px;
    padding-top: 2px;
    border-radius: 9px;
  }
  .tool:disabled { color: #3b3f42; }
  .tool-label {
    font-size: 13px;
    font-weight: 500;
    line-height: 15px;
  }
  .tool.active { background: #282423; color: #8c5d29; }
  .tool.active::after {
    content: '';
    position: absolute;
    bottom: 1px;
    width: 27px;
    height: 4px;
    border-radius: 2px;
    background: #8c5d29;
  }
  .fx {
    font-weight: 600;
    font-style: italic;
    font-size: 17px;
    color: #8c5d29;
  }
  .tool-fx { font-size: 16px; line-height: 16px; }
  .page-input {
    flex: none;
    width: 57px;
    height: 30px;
    border: 0;
    border-radius: 6px;
    background: #272a2f;
    font-size: 17px;
    text-align: center;
  }
  .page-total {
    flex: none;
    width: 4px;
    height: 40px;
    margin: 0 12px 0 6px;
    overflow: hidden;
    font-size: 14px;
    line-height: 20px;
  }
  .saved-icon { flex: none; margin-right: 7px; }
  .saved {
    width: 28px;
    font-size: 14px;
    font-weight: 500;
    line-height: 20px;
    word-break: break-all;
  }

  .tabs {
    flex: none;
    height: 52px;
    background: #212425;
    border-bottom: 2px solid #1c1f20;
  }
  .tab {
    display: flex;
    align-items: center;
    width: 243px;
    height: 49px;
    padding: 3px 0 0 13px;
    border-bottom: 3px solid #2a4c77;
    background: #212728;
    font-size: 16px;
  }
  .doc { margin-right: 11px; color: #2c4d7a; }
  .tab-close { margin-left: 25px; display: flex; color: #5c5f5f; }
  .tab-close .icon { stroke-width: 1; }

  .workspace { flex: 1; display: flex; min-height: 0; }
  .main { flex: 1; display: flex; flex-direction: column; min-width: 0; }
  .canvas {
    flex: 1;
    position: relative;
    min-height: 0;
    padding: 4px 0 0 209px;
    overflow: hidden;
    background: #191d1e;
  }
  .sheet { display: block; font-family: Roboto, "Liberation Sans", sans-serif; }
  .ln { fill: none; stroke: #252726; stroke-width: 0.8; }
  .paper { fill: #6d706f; }
  .mid { text-anchor: middle; }
  .tiny { font-size: 3px; fill: #1c1e1d; }
  .tiny4 { font-size: 4px; fill: #1c1e1d; }
  .fine { font-size: 3px; fill: #1c1e1d; }
  .strong { font-weight: 700; }
  .room { font-size: 4px; font-weight: 700; fill: #101111; }
  .head { font-size: 5px; font-weight: 700; fill: #101111; }
  .plan-title, .block-title { font-size: 7px; font-weight: 700; fill: #101111; }
  .block-title { font-size: 6px; }
  .sheet-no {
    font-size: 24px;
    font-weight: 700;
    text-anchor: middle;
    fill: #101111;
  }
  .lab { font-family: "DejaVu Sans Mono", monospace; font-size: 5px; }
  .note { font-family: Inter, sans-serif; font-size: 6px; font-weight: 500; fill: #702525; }
  .red { fill: #7c2a2a; }
  .pin, .trade, .outlets { font-family: Inter, sans-serif; font-weight: 700; text-anchor: middle; }
  .pin { font-size: 14px; fill: #8f9291; }
  .small { font-size: 9px; }
  .trade { font-size: 12px; }
  .outlets { font-size: 8px; }

  .scale-chip {
    position: absolute;
    left: 15px;
    bottom: 22px;
    display: flex;
    align-items: center;
    gap: 9px;
    height: 29px;
    padding: 0 12px;
    border-radius: 8px;
    background: #121515;
    font-family: "DejaVu Sans Mono", monospace;
    font-size: 14px;
    font-weight: 700;
  }
  .zoom-bar {
    position: absolute;
    right: 17px;
    bottom: 23px;
    display: flex;
    gap: 6px;
  }
  .zoom {
    display: flex;
    align-items: center;
    justify-content: center;
    width: 43px;
    height: 43px;
    border-radius: 9px;
    background: #1b1d1f;
    color: #727475;
  }
  .zoom .icon { stroke-width: 2; }
  .light-btn {
    background: #4e504f;
    color: #777a79;
    box-shadow: 0 2px 8px #00000033;
    font-size: 16px;
    font-weight: 600;
  }
  .wide { width: 49px; }

  .status {
    flex: none;
    display: flex;
    align-items: center;
    height: 30px;
    padding: 0 17px 0 15px;
    background: linear-gradient(90deg, #262a2b, #363939 13%, #434644 30%, #434644 78%, #303334 86%, #1f2324 92%);
    font-size: 14px;
    font-weight: 500;
    color: #787b7a;
  }
  .status i { width: 1px; height: 16px; margin: 0 22px; background: #555857; }
  .mode { margin-left: 23px; }
  .calibrated { margin-left: 5px; }
  .ortho { margin-left: 24px; }
  .pages { margin-left: auto; color: #606363; }

  .palette {
    flex: none;
    width: 71px;
    padding: 13px 8px 0 0;
    border-left: 1px solid #24292a;
    background: #1b1e1f;
  }
  .group {
    display: flex;
    align-items: flex-end;
    justify-content: flex-end;
    width: 100%;
    height: 54px;
    margin-bottom: 21px;
    padding: 4px 6px;
    border-radius: 9px;
    color: #4a4d4e;
  }
  .group.on { background: #233a72; }
  .group .icon { stroke-width: 1; }
  .palette-tools {
    display: flex;
    flex-direction: column;
    gap: 39px;
    align-items: center;
    padding: 175px 0 0 8px;
  }

  .calc {
    position: absolute;
    top: 134px;
    right: 20px;
    width: 465px;
    border: 2px solid #513c20;
    border-radius: 24px;
    overflow: hidden;
    background: #141516;
    box-shadow: 0 16px 60px 4px #000000a0;
  }
  .calc-head {
    display: flex;
    align-items: center;
    height: 43px;
    padding: 0 18px 0 17px;
  }
  .calc-head h2 { margin: 0 11px 0 12px; font-size: 17px; font-weight: 700; color: #858887; }
  .model { font-size: 13px; color: #3a3d3d; }
  .calc-close { display: flex; margin-left: auto; }
  .tape {
    height: 112px;
    padding: 7px 14px 0 19px;
    background: #141615;
    font-family: "DejaVu Sans Mono", monospace;
    font-size: 15px;
    color: #858886;
  }
  .tape-row {
    display: flex;
    justify-content: space-between;
    line-height: 24px;
  }
  .tape-row b { color: #37723f; }
  .tape-row.total {
    margin: 3px 0 0;
    border-top: 1px solid #1d1f1f;
    font-size: 19px;
    line-height: 30px;
    font-weight: 700;
    color: #8d602b;
  }
  .total b { font-size: 16px; color: #8d602b; }
  .display {
    display: block;
    height: 68px;
    padding-right: 15px;
    background: #101211;
    font-family: "DejaVu Sans Mono", monospace;
    font-size: 39px;
    line-height: 68px;
    text-align: right;
    color: #667868;
  }
  .keys {
    display: flex;
    flex-direction: column;
    gap: 3px;
    padding: 7px 5px 5px;
    background: #17181a;
  }
  .key-row { display: flex; gap: 3px; }
  .key {
    flex: 1 1 0;
    height: 60px;
    border-top: 1px solid #2b2d2e;
    border-radius: 8px;
    background: linear-gradient(#222425, #1a1b1e);
    box-shadow: 0 1px 2px #0e0f10;
    font-size: 18px;
    font-weight: 600;
    color: #757776;
  }
  .key.small { font-size: 15px; }
  .digit { background: linear-gradient(#2d2f2f, #252727); border-color: #363838; }
  .op { background: linear-gradient(#262829, #1f2121); }
  .fn { background: linear-gradient(#4a3519, #3a2815); border-color: #5b4322; }

  .modal-layer {
    position: absolute;
    inset: 0;
    display: flex;
    align-items: center;
    justify-content: center;
  }
  .modal {
    width: 517px;
    padding: 21px 21px 19px;
    border: 1px solid #5a5d5d;
    border-radius: 30px;
    outline: 1px solid #101212;
    background: #222627;
    box-shadow: 0 24px 60px #00000080;
    font-size: 17px;
    color: #e4e5e5;
  }
  .modal-head { display: flex; align-items: center; justify-content: space-between; }
  .modal-head h1 { margin: 0; font-size: 18px; font-weight: 700; }
  .btn {
    width: 66px;
    height: 33px;
    border-radius: 8px;
    background: #323637;
  }
  .done { width: 77px; }
  .picker { position: relative; width: 242px; margin-top: 13px; font-size: 18px; }
  .picker select {
    appearance: none;
    display: block;
    width: 100%;
    height: 33px;
    padding: 0 40px;
    border: 0;
    border-radius: 9px;
    background: #323637;
  }
  .cube, .updown { position: absolute; pointer-events: none; }
  .cube { left: 17px; top: 7px; }
  .updown { right: 13px; top: 9px; stroke-width: 2; }
  .fields { display: flex; flex-direction: column; gap: 8px; margin-top: 12px; }
  .field { display: flex; align-items: center; justify-content: space-between; }
  .field label { font-size: 16px; }
  .field input {
    width: 261px;
    height: 36px;
    padding: 0 9px;
    border: 1px solid #303233;
    border-radius: 9px;
    background: #252628;
    outline: 0;
  }
  .field input:focus {
    border-color: #3d6a96;
    box-shadow: 0 0 0 3px #3d6a96;
  }
  .field input::selection { background: #47628f; color: #e4e5e5; }
  .results { display: flex; flex-direction: column; gap: 8px; margin-top: 17px; }
  .result { display: flex; align-items: center; color: #9fa1a1; }
  .result span { font-size: 16px; }
  .result strong {
    margin: 0 11px 0 auto;
    font-family: "DejaVu Sans Mono", monospace;
    font-weight: 700;
    color: #e4e5e5;
  }
  .result .btn { color: #e4e5e5; }
  .hint { margin: 16px 0 0; font-size: 14px; font-weight: 600; line-height: 20px; color: #9fa1a1; }
</style>
